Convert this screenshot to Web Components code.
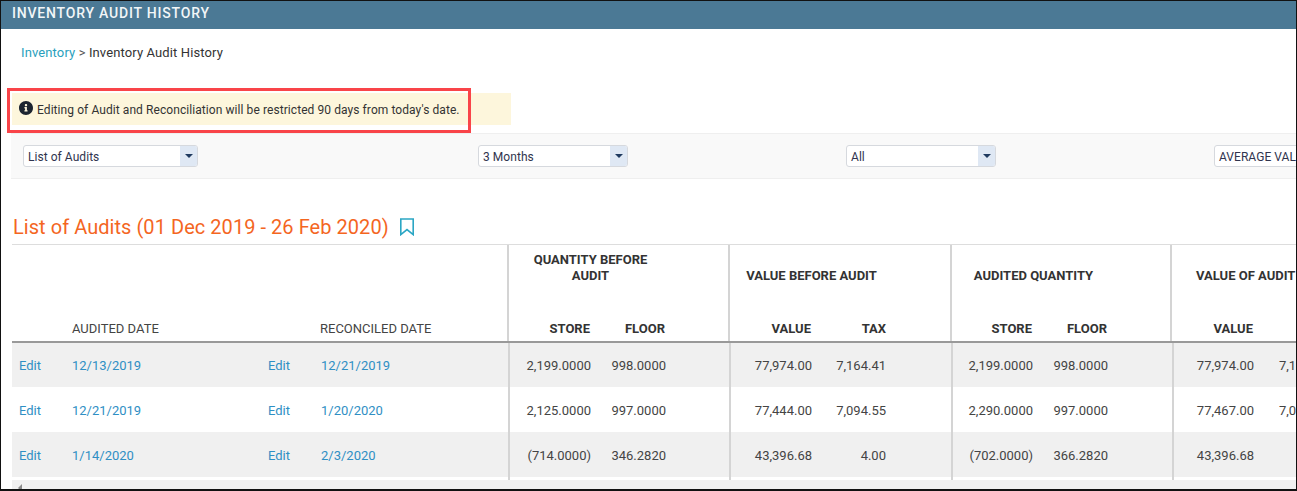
<!DOCTYPE html>
<html lang="en">
  <head>
    <meta charset="UTF-8" />
    <title>Inventory Audit History</title>
    <style>
      html, body { margin: 0; padding: 0; background: #fff; }
      body { font-family: Roboto, "Liberation Sans", sans-serif; color: #333; }
    </style>
  </head>
  <body>
    <app-frame>
      <page-header>INVENTORY AUDIT HISTORY</page-header>
      <bread-crumb><a slot="parent">Inventory</a>Inventory Audit History</bread-crumb>
      <info-alert>Editing of Audit and Reconciliation will be restricted 90 days from today's date.</info-alert>
      <filter-bar>
        <drop-down style="width:175px">List of Audits</drop-down>
        <drop-down style="width:150px">3 Months</drop-down>
        <drop-down style="width:150px">All</drop-down>
        <drop-down style="width:150px" open-ended>AVERAGE VAL</drop-down>
      </filter-bar>
      <section-title>List of Audits (01 Dec 2019 - 26 Feb 2020)</section-title>
      <audit-table></audit-table>
    </app-frame>

    <script>
      // small helper, every element below is just a shadow root with some html
      function shadow(el, html) {
        el.attachShadow({ mode: 'open' }).innerHTML = html
      }

      customElements.define('app-frame', class extends HTMLElement {
        constructor() {
          super()
          shadow(this, `<style>
            :host { display: block; box-sizing: border-box; width: 1297px; height: 491px;
                    border: 1px solid #111; border-bottom-width: 2px; overflow: hidden; position: relative; background: #fff; }
          </style><slot></slot>`)
        }
      })

      customElements.define('page-header', class extends HTMLElement {
        constructor() {
          super()
          shadow(this, `<style>
            :host { display: block; height: 28px; padding-left: 11px; background: #4b7995;
                    color: #f2f6f8; font: 500 14px/25px Roboto, sans-serif; letter-spacing: .8px; }
          </style><slot></slot>`)
        }
      })

      customElements.define('bread-crumb', class extends HTMLElement {
        constructor() {
          super()
          shadow(this, `<style>
            :host { display: block; padding: 15px 0 0 20px; height: 49px; box-sizing: content-box;
                    font: 13px/17px Roboto, sans-serif; color: #333; letter-spacing: .12px; }
            ::slotted(a) { color: #2a9fbd; }
            .sep { color: #555; }
          </style><slot name="parent"></slot><span class="sep"> &gt; </span><slot></slot>`)
        }
      })

      customElements.define('info-alert', class extends HTMLElement {
        constructor() {
          super()
          shadow(this, `<style>
            :host { display: flex; align-items: center; width: 499px; height: 32px; box-sizing: border-box;
                    margin-left: 11px; padding: 1px 0 0 7px; background: #fdf6dc; color: #333;
                    font: 12px/16px Roboto, sans-serif; letter-spacing: .075px; }
            svg { width: 14px; height: 14px; margin: -4px 4px 0 0; flex: none; }
            .mark { position: absolute; left: 6px; top: 87px; width: 464px; height: 45px; box-sizing: border-box;
                    border: 3px solid #f94449; pointer-events: none; }
          </style>
          <svg viewBox="8 8 496 496"><path fill="#1c2430" d="M256 8C119.043 8 8 119.083 8 256c0 136.997 111.043 248 248 248s248-111.003 248-248C504 119.083 392.957 8 256 8zm0 110c23.196 0 42 18.804 42 42s-18.804 42-42 42-42-18.804-42-42 18.804-42 42-42zm56 254c0 6.627-5.373 12-12 12h-88c-6.627 0-12-5.373-12-12v-24c0-6.627 5.373-12 12-12h12v-64h-12c-6.627 0-12-5.373-12-12v-24c0-6.627 5.373-12 12-12h64c6.627 0 12 5.373 12 12v100h12c6.627 0 12 5.373 12 12v24z"/></svg>
          <span><slot></slot></span>
          <div class="mark"></div>`)
        }
      })

      customElements.define('filter-bar', class extends HTMLElement {
        constructor() {
          super()
          shadow(this, `<style>
            :host { display: grid; grid-template-columns: 455px 368px 368px 368px; align-items: center; margin: 8px 0 0 10px;
                    height: 46px; box-sizing: border-box; padding-left: 12px; background: #f9f9f9;
                    border-top: 1px solid #efefef; border-bottom: 1px solid #efefef; }
          </style><slot></slot>`)
        }
      })

      customElements.define('drop-down', class extends HTMLElement {
        constructor() {
          super()
          shadow(this, `<style>
            :host { display: flex; height: 22px; box-sizing: border-box; background: #fff; border: 1px solid #d6d9de;
                    border-radius: 3px; color: #30344e; font: 12px/22px Roboto, sans-serif; letter-spacing: .05px; overflow: hidden; }
            .label { flex: 1; padding-left: 4px; white-space: nowrap; }
            .arrow { width: 17px; background: #dfe8f4; display: flex; align-items: center; justify-content: center; }
            .arrow i { width: 0; height: 0; border: 4px solid transparent; border-top: 4px solid #1f3a5f; border-bottom: 0; margin-top: -1px; }
            :host([open-ended]) .arrow { display: none; }
          </style><span class="label"><slot></slot></span><span class="arrow"><i></i></span>`)
        }
      })

      customElements.define('section-title', class extends HTMLElement {
        constructor() {
          super()
          shadow(this, `<style>
            :host { display: flex; align-items: center; height: 65px; box-sizing: border-box; padding: 30px 0 0 12px;
                    color: #f4661f; font: 20px/30px Roboto, sans-serif; letter-spacing: .05px; }
            svg { width: 16px; height: 18px; margin: 0 0 0 10px; }
          </style><span><slot></slot></span>
          <svg viewBox="0 0 16 18"><path d="M1.8 1H14.2V16.6L8 11.6 1.8 16.6Z" fill="none" stroke="#2ba6c4" stroke-width="1.6"/></svg>`)
        }
      })

      const rows = [
        ['12/13/2019', '12/21/2019', '2,199.0000', '998.0000', '77,974.00', '7,164.41', '2,199.0000', '998.0000', '77,974.00', '7,1'],
        ['12/21/2019', '1/20/2020', '2,125.0000', '997.0000', '77,444.00', '7,094.55', '2,290.0000', '997.0000', '77,467.00', '7,0'],
        ['1/14/2020', '2/3/2020', '(714.0000)', '346.2820', '43,396.68', '4.00', '(702.0000)', '366.2820', '43,396.68', '']
      ]

      function rowHtml(r) {
        return `<div class="row">
          <a class="edit">Edit</a><a class="date">${r[0]}</a><a class="edit2">Edit</a><a class="date">${r[1]}</a>
          <span class="num g">${r[2]}</span><span class="num">${r[3]}</span><span></span>
          <span class="num g">${r[4]}</span><span class="num p8">${r[5]}</span><span></span>
          <span class="num g p8">${r[6]}</span><span class="num p8">${r[7]}</span><span></span>
          <span class="num g p8">${r[8]}</span><span class="cut">${r[9]}</span>
        </div>`
      }

      customElements.define('audit-table', class extends HTMLElement {
        constructor() {
          super()
          shadow(this, `<style>
            :host { display: block; margin-left: 11px; border-top: 1px solid #ddd; font: 13px/17px Roboto, sans-serif; color: #444; width: 1285px; overflow: hidden; position: relative; }
            .head { display: grid; grid-template-columns: 60px 196px 52px 187px 90px 75px 56px 90px 75px 57px 90px 75px 55px 90px;
                    grid-template-rows: 61px 35px; border-bottom: 2px solid #999; color: #333; }
            .head span { white-space: nowrap; }
            .group { grid-row: 1; border-left: 2px solid #d4d4d4; display: flex; align-items: center; justify-content: center;
                     text-align: center; white-space: normal !important; padding: 0 14px; box-sizing: border-box; line-height: 16px;
                     font-weight: 700; }
            .group.two { padding-bottom: 16px; }
            .group.last { white-space: nowrap !important; justify-content: flex-start; padding: 0 0 0 24px; }
            .sub { grid-row: 2; text-align: right; padding-right: 7px; font-weight: 700; line-height: 46px; height: 35px; }
            .sub.p8 { padding-right: 8px; }
            .sub.g { border-left: 2px solid #d4d4d4; }
            .plain { grid-row: 2; line-height: 46px; height: 35px; color: #444; }
            .row { display: grid; grid-template-columns: 60px 196px 53px 187px 90px 75px 56px 90px 75px 57px 90px 75px 56px 90px 75px;
                   height: 45px; }
            .row:first-child { height: 44px; }
            .row:nth-child(odd) { background: #f0f0f0; }
            .row > * { line-height: 47px; height: 45px; white-space: nowrap; }
            .row:first-child > * { line-height: 46px; height: 44px; }
            a { color: #2f8fc4; }
            .edit { padding-left: 7px; }
            .num { text-align: right; padding-right: 7px; }
            .num.p8 { padding-right: 8px; }
            .num.g { border-left: 2px solid #d4d4d4; }
            .cut { padding-left: 17px; }
            .end { height: 3px; display: grid; grid-template-columns: 498px 221px 222px 221px; }
            .end i { border-right: 2px solid #d4d4d4; }
            .bar { height: 10px; background: #f0f0f0; position: relative; }
            .bar i { position: absolute; left: 6px; top: 4px; width: 0; height: 0; border: 4px solid transparent; border-right: 4px solid #8a8a8a; border-left: 0; }
          </style>
          <div class="head">
            <span class="plain" style="grid-column:2">AUDITED DATE</span>
            <span class="plain" style="grid-column:4">RECONCILED DATE</span>
            <span class="group two" style="grid-column:5 / 7">QUANTITY BEFORE AUDIT</span>
            <span class="group" style="grid-column:8 / 10">VALUE BEFORE AUDIT</span>
            <span class="group" style="grid-column:11 / 13">AUDITED QUANTITY</span>
            <span class="group last" style="grid-column:14 / 15">VALUE OF AUDIT</span>
            <span class="sub g" style="grid-column:5">STORE</span><span class="sub" style="grid-column:6">FLOOR</span>
            <span class="sub g" style="grid-column:8">VALUE</span><span class="sub" style="grid-column:9">TAX</span>
            <span class="sub g p8" style="grid-column:11">STORE</span><span class="sub p8" style="grid-column:12">FLOOR</span>
            <span class="sub g" style="grid-column:14">VALUE</span>
          </div>
          <div class="rows">${rows.map(rowHtml).join('')}</div>
          <div class="end"><i></i><i></i><i></i><i></i></div>
          <div class="bar"><i></i></div>`)
        }
      })
    </script>
  </body>
</html>
